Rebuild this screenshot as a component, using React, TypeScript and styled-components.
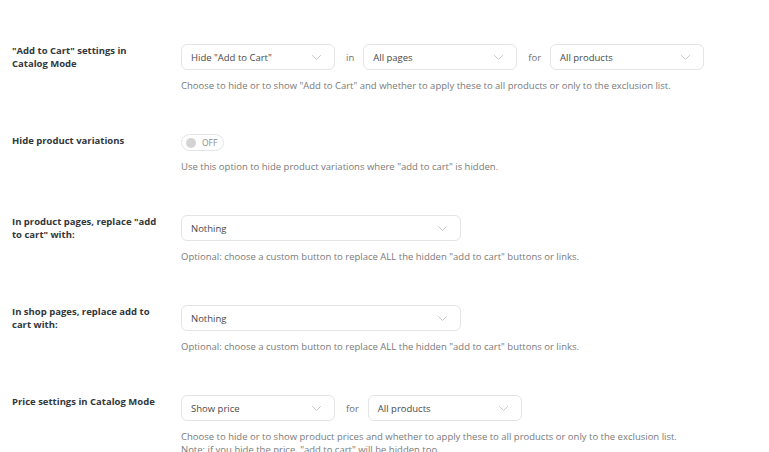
import React from 'react';
import styled, { createGlobalStyle } from 'styled-components';

const GlobalStyle = createGlobalStyle`
  html, body {
    margin: 0;
    padding: 0;
    background: #ffffff;
  }
  body {
    font-family: "Open Sans", "Noto Sans", Arial, sans-serif;
    overflow: hidden;
  }
`;

const Page = styled.div`
  padding: 0 12px;
  width: 769px;
  box-sizing: border-box;
`;

// tail of the previous section's help text, scrolled mostly out of view
const PrevDescription = styled.div`
  margin: -12px 0 0 169px;
  font-size: 9.5px;
  line-height: 14px;
  color: #7a7a7a;
  white-space: nowrap;
`;

const Row = styled.div<{ $first?: boolean }>`
  display: grid;
  grid-template-columns: 150px 1fr;
  column-gap: 19px;
  margin-top: 42px;
`;

const Label = styled.div`
  font-size: 9.5px;
  font-weight: 700;
  line-height: 13px;
  color: #32373c;
`;

const Field = styled.div`
  display: flex;
  flex-direction: column;
`;

const Controls = styled.div`
  display: flex;
  align-items: center;
`;

const Connector = styled.span`
  font-size: 9.5px;
  color: #6f6f6f;
  padding: 0 9px 0 11px;
`;

const SelectBox = styled.div<{ $width: number }>`
  width: ${props => props.$width}px;
  height: 26px;
  box-sizing: border-box;
  border: 1px solid #e2e4e7;
  border-radius: 6px;
  background: #fff;
  display: flex;
  align-items: center;
  justify-content: space-between;
  padding: 0 13px 0 9px;
  font-size: 9.5px;
  color: #4a4a4a;
`;

const Description = styled.div`
  margin-top: 9px;
  font-size: 9.5px;
  line-height: 13px;
  color: #7a7a7a;
`;

const Toggle = styled.div`
  width: 43px;
  height: 17px;
  box-sizing: border-box;
  border: 1px solid #e2e4e7;
  border-radius: 9px;
  display: flex;
  align-items: center;
  padding-left: 4px;
  gap: 6px;
  font-size: 8.5px;
  color: #8a8a8a;
`;

const Knob = styled.span`
  width: 10px;
  height: 10px;
  border-radius: 50%;
  background: #d4d4d4;
`;

const Chevron = () => (
  <svg width="9" height="5" viewBox="0 0 9 5" fill="none">
    <path d="M0.5 0.5L4.5 4.5L8.5 0.5" stroke="#c4c7cc" strokeWidth="1" strokeLinecap="round" strokeLinejoin="round" />
  </svg>
);

const Select: React.FC<{ value: string; width: number }> = ({ value, width }) => (
  <SelectBox $width={width}>
    <span>{value}</span>
    <Chevron />
  </SelectBox>
);

export default function App() {
  return (
    <Page>
      <GlobalStyle />
      <PrevDescription>
        Choose whether to apply Catalog Mode to all pages, or only to pages of the exclusion list you will set up.
      </PrevDescription>

      <Row>
        <Label>"Add to Cart" settings in Catalog Mode</Label>
        <Field>
          <Controls>
            <Select value={'Hide "Add to Cart"'} width={154} />
            <Connector>in</Connector>
            <Select value="All pages" width={154} />
            <Connector>for</Connector>
            <Select value="All products" width={154} />
          </Controls>
          <Description>
            Choose to hide or to show "Add to Cart" and whether to apply these to all products or only to the exclusion list.
          </Description>
        </Field>
      </Row>

      <Row>
        <Label>Hide product variations</Label>
        <Field>
          <Toggle>
            <Knob />
            OFF
          </Toggle>
          <Description>Use this option to hide product variations where "add to cart" is hidden.</Description>
        </Field>
      </Row>

      <Row>
        <Label>In product pages, replace "add to cart" with:</Label>
        <Field>
          <Controls>
            <Select value="Nothing" width={280} />
          </Controls>
          <Description>
            Optional: choose a custom button to replace ALL the hidden "add to cart" buttons or links.
          </Description>
        </Field>
      </Row>

      <Row>
        <Label>In shop pages, replace add to cart with:</Label>
        <Field>
          <Controls>
            <Select value="Nothing" width={280} />
          </Controls>
          <Description>
            Optional: choose a custom button to replace ALL the hidden "add to cart" buttons or links.
          </Description>
        </Field>
      </Row>

      <Row>
        <Label>Price settings in Catalog Mode</Label>
        <Field>
          <Controls>
            <Select value="Show price" width={154} />
            <Connector>for</Connector>
            <Select value="All products" width={154} />
          </Controls>
          <Description>
            Choose to hide or to show product prices and whether to apply these to all products or only to the exclusion list.
            <br />
            Note: if you hide the price, "add to cart" will be hidden too.
          </Description>
        </Field>
      </Row>
    </Page>
  );
}
